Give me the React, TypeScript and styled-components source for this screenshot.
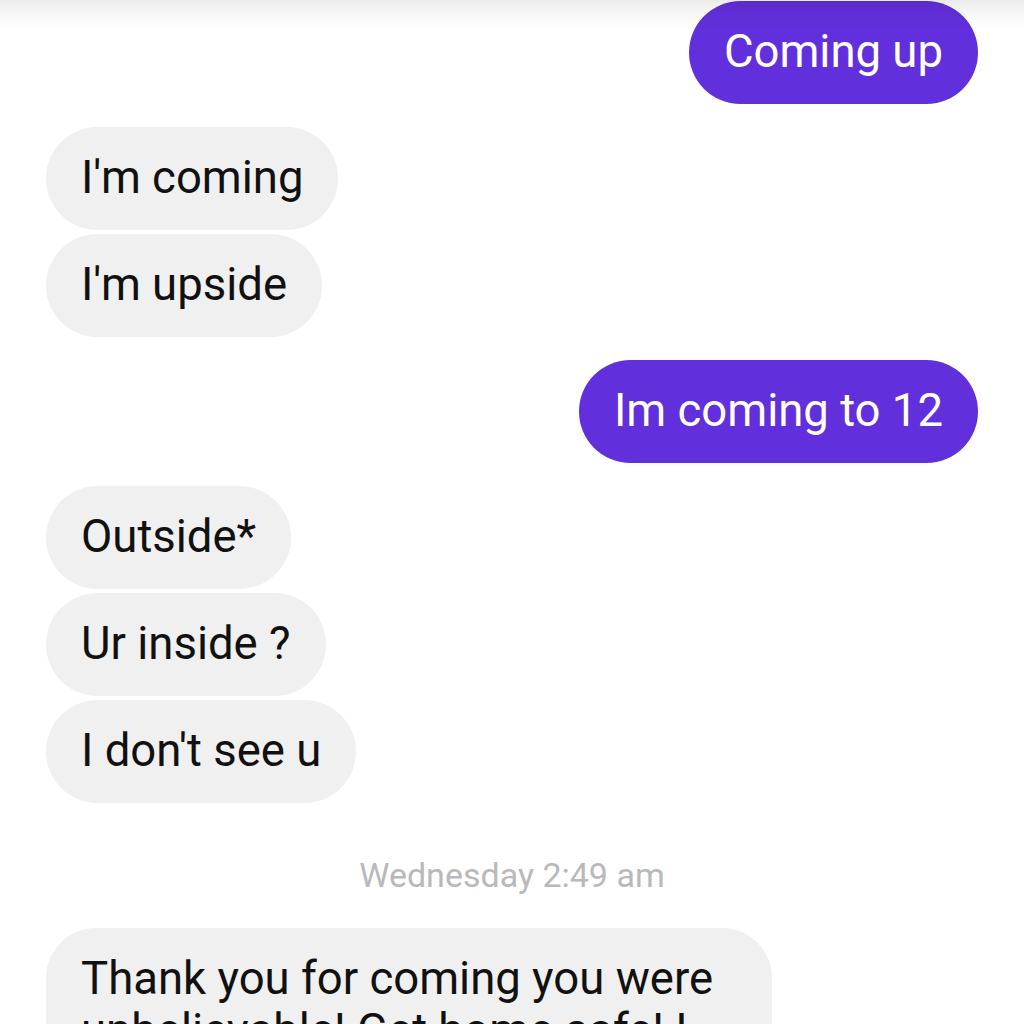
import styled, { createGlobalStyle } from 'styled-components';

type Side = 'in' | 'out';

interface Msg {
  side: Side;
  text: string;
  groupStart?: boolean;
}

const messages: Msg[] = [
  { side: 'out', text: 'Coming up', groupStart: true },
  { side: 'in', text: "I'm coming", groupStart: true },
  { side: 'in', text: "I'm upside" },
  { side: 'out', text: 'Im coming to 12', groupStart: true },
  { side: 'in', text: 'Outside*', groupStart: true },
  { side: 'in', text: 'Ur inside ?' },
  { side: 'in', text: "I don't see u" },
];

function App() {
  return (
    <>
      <GlobalStyle />
      <Screen>
        <TopShade />
        <Thread>
          {messages.map((m, i) => (
            <Bubble key={i} side={m.side} gap={i === 0 ? 0 : m.groupStart ? 23 : 4}>
              {m.text}
            </Bubble>
          ))}
          <Stamp>Wednesday 2:49 am</Stamp>
          <WideBubble side="in" gap={33}>
            Thank you for coming you were
            <br />
            unbelievable! Get home safe! I
          </WideBubble>
        </Thread>
      </Screen>
    </>
  );
}

export default App;

const GlobalStyle = createGlobalStyle`
  html, body {
    margin: 0;
    padding: 0;
    background: #ffffff;
    font-family: Roboto, "Liberation Sans", sans-serif;
  }
`;

const Screen = styled.div`
  position: relative;
  width: 1024px;
  height: 1024px;
  overflow: hidden;
  background: #ffffff;
`;

const TopShade = styled.div`
  position: absolute;
  top: 0;
  left: 0;
  right: 0;
  height: 32px;
  background: linear-gradient(
    to bottom,
    rgba(0, 0, 0, 0.08),
    rgba(0, 0, 0, 0.025) 50%,
    rgba(0, 0, 0, 0)
  );
  pointer-events: none;
  z-index: 2;
`;

const Thread = styled.div`
  display: flex;
  flex-direction: column;
  padding: 1px 46px 0;
`;

const Bubble = styled.div<{ side: Side; gap: number }>`
  align-self: ${(p) => (p.side === 'out' ? 'flex-end' : 'flex-start')};
  margin-top: ${(p) => p.gap}px;
  padding: 25px 35px 26px;
  border-radius: 52px;
  background: ${(p) => (p.side === 'out' ? '#612fdc' : '#f0f0f0')};
  color: ${(p) => (p.side === 'out' ? '#ffffff' : '#111111')};
  font-size: 45.5px;
  line-height: 52px;
  white-space: nowrap;
`;

const WideBubble = styled(Bubble)`
  box-sizing: border-box;
  width: 726px;
  border-radius: 50px;
`;

const Stamp = styled.div`
  margin-top: 52px;
  align-self: center;
  color: #b9b9bb;
  font-size: 34px;
  line-height: 40px;
`;
